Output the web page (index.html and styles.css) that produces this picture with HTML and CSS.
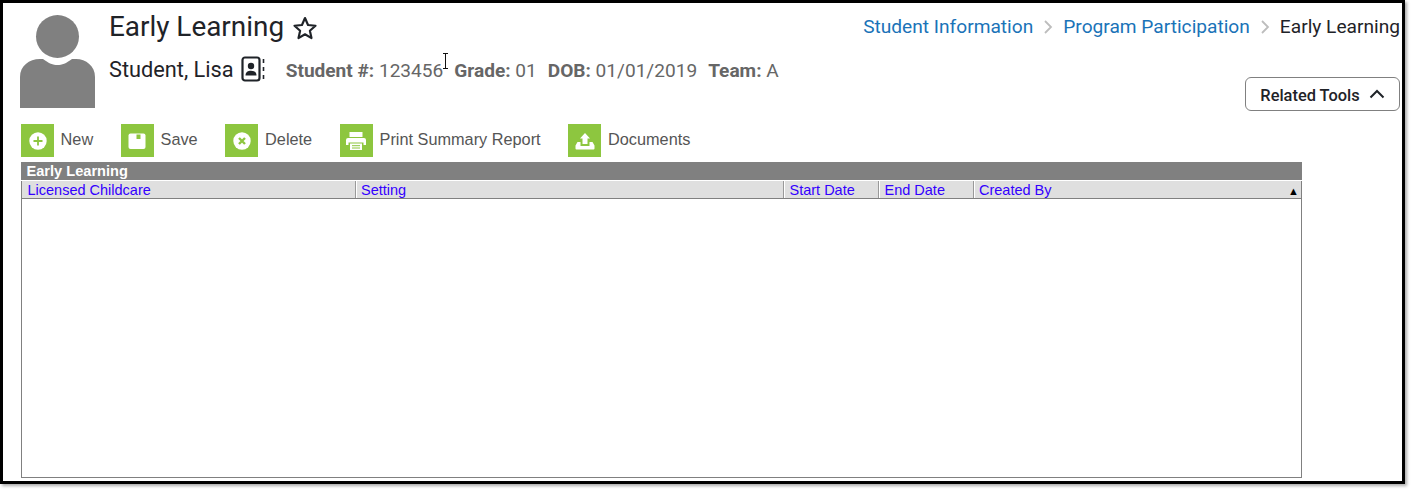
FILE: index.html
```html
<!DOCTYPE html>
<html lang="en">
<head>
<meta charset="utf-8">
<title>Early Learning</title>
<link rel="stylesheet" href="styles.css">
</head>
<body>
<div class="frame">
  <header class="head">
    <svg class="avatar" viewBox="0 0 75 93" aria-hidden="true">
      <circle cx="37.500" cy="21.500" r="21.500" fill="#808080"/>
      <path d="M0 93V62C0 51 9 44 20 44H23C29 48.500 33 50 37.500 50C42 50 46 48.500 52 44H56C66 44 75 51 75 62V93Z" fill="#808080"/>
    </svg>
    <div class="identity">
      <h1 class="title">Early Learning
        <svg class="star" viewBox="0 0 24 24" aria-hidden="true"><path d="M12 2.800 14.800 9.200 21.700 9.900 16.500 14.500 18 21.300 12 17.800 6 21.300 7.500 14.500 2.300 9.900 9.200 9.200Z" fill="none" stroke="#1f2328" stroke-width="2" stroke-linejoin="round"/></svg>
      </h1>
      <div class="student">
        <span class="name">Student, Lisa</span>
        <svg class="card" viewBox="0 0 24 26" aria-hidden="true">
          <rect x="1.500" y="1.500" width="17" height="23" rx="2.500" fill="none" stroke="#1f2328" stroke-width="2.200"/>
          <circle cx="10" cy="10" r="3.200" fill="#1f2328"/>
          <path d="M4.500 19.500C4.500 16 7 14.800 10 14.800S15.500 16 15.500 19.500Z" fill="#1f2328"/>
          <path d="M22.500 3V7M22.500 11V15M22.500 19V23" stroke="#1f2328" stroke-width="1.600"/>
        </svg>
        <span class="meta">
          <span class="fact"><b>Student #:</b> 123456</span>
          <span class="fact"><b>Grade:</b> 01</span>
          <span class="fact"><b>DOB:</b> 01/01/2019</span>
          <span class="fact"><b>Team:</b> A</span>
        </span>
      </div>
    </div>
    <div class="aside">
      <nav class="crumbs">
        <a>Student Information</a>
        <svg class="chev" viewBox="0 0 10 16" aria-hidden="true"><path d="M2 2 8 8 2 14" fill="none" stroke="#bdbdbd" stroke-width="1.800"/></svg>
        <a>Program Participation</a>
        <svg class="chev" viewBox="0 0 10 16" aria-hidden="true"><path d="M2 2 8 8 2 14" fill="none" stroke="#bdbdbd" stroke-width="1.800"/></svg>
        <span>Early Learning</span>
      </nav>
      <button class="related">Related Tools
        <svg class="up" viewBox="0 0 16 10" aria-hidden="true"><path d="M1.500 8.500 8 2 14.500 8.500" fill="none" stroke="#1f2328" stroke-width="2"/></svg>
      </button>
    </div>
  </header>

  <div class="toolbar">
    <div class="tool"><span class="tile"><svg viewBox="0 0 22 22" aria-hidden="true"><circle cx="11" cy="11" r="8.700" fill="#fff"/><path d="M11 6.500V15.500M6.500 11H15.500" stroke="#8dc63f" stroke-width="1.800"/></svg></span>New</div>
    <div class="tool"><span class="tile"><svg viewBox="0 0 22 22" aria-hidden="true"><path d="M4.500 3.500H17.500Q19.500 3.500 19.500 5.500V17Q19.500 19 17.500 19H4.500Q2.500 19 2.500 17V5.500Q2.500 3.500 4.500 3.500Z" fill="#fff"/><rect x="10.500" y="4.500" width="4" height="4.500" fill="#8dc63f"/></svg></span>Save</div>
    <div class="tool"><span class="tile"><svg viewBox="0 0 22 22" aria-hidden="true"><circle cx="11" cy="11" r="8.700" fill="#fff"/><path d="M8 8 14 14M14 8 8 14" stroke="#8dc63f" stroke-width="2.400"/></svg></span>Delete</div>
    <div class="tool"><span class="tile"><svg viewBox="0 0 22 22" aria-hidden="true"><path d="M4.500 2H17.500V7H4.500Z" fill="#fff"/><path d="M3 8H19Q21 8 21 10V15H18.500V12.500H3.500V15H1V10Q1 8 3 8Z" fill="#fff"/><path d="M5 13.500H17V20H5Z" fill="#fff"/><path d="M7 15.700H15M7 18H15" stroke="#8dc63f" stroke-width="1"/></svg></span>Print Summary Report</div>
    <div class="tool"><span class="tile"><svg viewBox="0 0 22 22" aria-hidden="true"><path d="M11 3 16 8.500H13.500V14H8.500V8.500H6Z" fill="#fff"/><path d="M3.500 12H6.500V16H15.500V12H18.500L20.500 15.500V18.500Q20.500 19.500 19.500 19.500H2.500Q1.500 19.500 1.500 18.500V15.500Z" fill="#fff"/></svg></span>Documents</div>
  </div>

  <section class="grid">
    <div class="grid-title">Early Learning</div>
    <div class="grid-head">
      <a class="col col-a">Licensed Childcare</a>
      <a class="col col-b">Setting</a>
      <a class="col col-c">Start Date</a>
      <a class="col col-c">End Date</a>
      <a class="col col-d">Created By<span class="sort">▲</span></a>
    </div>
    <div class="grid-body"></div>
  </section>
</div>
<svg class="cursor" viewBox="0 0 7 16" aria-hidden="true"><path d="M1 .5H6M3.500 .5V15.500M1 15.500H6" stroke="#111" fill="none"/></svg>
</body>
</html>
```
FILE: styles.css
```css
* { box-sizing: border-box; }
html, body { margin: 0; padding: 0; background: #fff; }
body { width: 1411px; height: 491px; overflow: hidden; font-family: Roboto, "Liberation Sans", sans-serif; color: #1f2328; }

.frame {
  width: 1405px;
  height: 484px;
  border: 3px solid #000;
  box-shadow: 2px 2px 3px #aaa;
  padding: 12px 2px 0 18px;
  background: #fff;
}

.head { display: flex; height: 109px; }
.avatar { width: 75px; height: 93px; flex: none; margin-left: -1px; }
.identity { margin-left: 14px; flex: none; }
.title { margin: -4px 0 0; font-size: 27.900px; font-weight: 400; line-height: 32px; display: flex; align-items: center; gap: 8px; }
.star { width: 26px; height: 26px; margin-top: 1px; }
.student { display: flex; align-items: center; margin-top: 11px; height: 30px; }
.name { font-size: 21.750px; }
.card { width: 24px; height: 26px; margin-left: 7px; }
.meta { display: flex; font-size: 19.080px; color: #666; margin-left: 21px; padding-top: 2px; }
.fact { margin-right: 11px; }

.aside { margin-left: auto; display: flex; flex-direction: column; align-items: flex-end; }
.crumbs { display: flex; align-items: center; height: 22px; margin-bottom: 2px; font-size: 19.150px; white-space: nowrap; }
.crumbs a { color: #1a73b8; }
.chev { width: 10px; height: 16px; margin: 2px 10px 0; }
.related {
  margin-top: 38px;
  width: 155px;
  height: 34px;
  border: 1px solid #808080;
  border-radius: 6px;
  background: #fff;
  font: 500 16.400px Roboto, sans-serif;
  color: #1f2328;
  display: flex;
  align-items: center;
  justify-content: center;
  gap: 9px;
  padding: 2px 0 0;
}
.up { width: 16px; height: 10px; margin-top: -3px; }

.toolbar { display: flex; height: 33px; font-family: "Liberation Sans", Arial, sans-serif; font-size: 16.300px; color: #555; }
.tool { display: flex; align-items: center; gap: 6.600px; margin-right: 27.800px; padding-bottom: 2px; }
.tile { width: 33px; height: 33px; margin-bottom: -2px; background: #8dc63f; display: flex; align-items: center; justify-content: center; }
.tile svg { width: 22px; height: 22px; }

.grid { width: 1281px; margin-top: 5px; font-family: "Liberation Sans", Arial, sans-serif; }
.grid-title { height: 18px; background: #808080; color: #fff; font-weight: 700; font-size: 14.600px; line-height: 19px; padding-left: 5.500px; }
.grid-head { display: flex; height: 18px; margin-top: 1px; background: #dfdfdf; border-left: 1px solid #808080; border-right: 1px solid #808080; border-bottom: 1px solid #808080; font-size: 14.500px; line-height: 18px; color: #3300ff; }
.col { padding-left: 5.500px; border-right: 1px solid #999; box-shadow: 1px 0 0 #fff; white-space: nowrap; }
.col-a { width: 334px; }
.col-b { width: 428px; padding-left: 5px; }
.col-c { width: 95px; }
.col-d { flex: 1; position: relative; border-right: 0; box-shadow: none; padding-left: 5px; }
.sort { position: absolute; right: 2px; top: 1px; font-size: 11px; color: #000; }
.grid-body { height: 279px; border: 1px solid #808080; border-top: 0; }

.cursor { position: absolute; left: 442px; top: 53px; width: 7px; height: 16px; }
```
